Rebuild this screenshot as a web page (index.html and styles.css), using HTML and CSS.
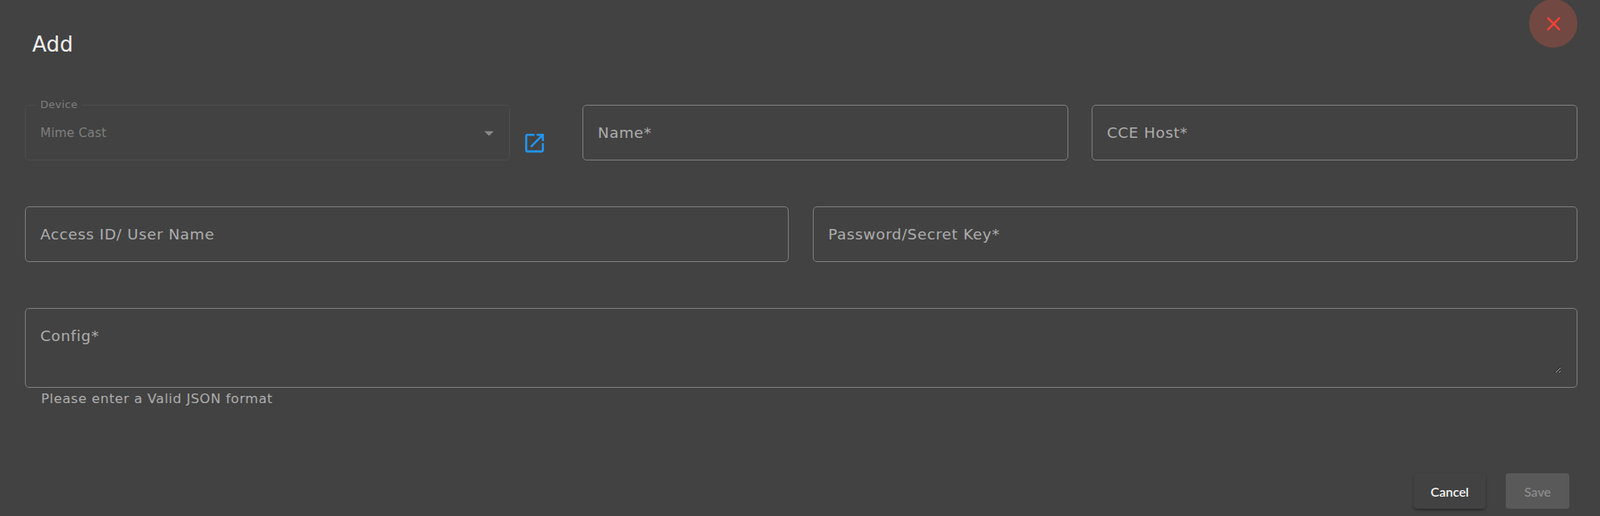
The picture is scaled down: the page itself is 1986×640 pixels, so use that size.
FILE: index.html
```html
<!DOCTYPE html>
<html lang="en">
<head>
<meta charset="utf-8">
<title>Add</title>
<link rel="stylesheet" href="styles.css">
</head>
<body>
<main class="dialog">
  <button class="close" type="button" aria-label="Close">
    <svg viewBox="0 0 24 24" width="24" height="24"><path d="M19 6.41 17.59 5 12 10.59 6.41 5 5 6.41 10.59 12 5 17.59 6.41 19 12 13.41 17.59 19 19 17.59 13.41 12z"/></svg>
  </button>
  <h1 class="title">Add</h1>
  <form class="form">
    <div class="row row-top">
      <div class="device-group">
        <div class="select">
          <span class="select-label">Device</span>
          <span class="select-value">Mime Cast</span>
          <svg class="caret" viewBox="0 0 24 24" width="28" height="28"><path d="M7 10l5 5 5-5z"/></svg>
        </div>
        <svg class="open-icon" viewBox="0 0 24 24" width="31" height="31"><path d="M19 19H5V5h7V3H5c-1.11 0-2 .9-2 2v14c0 1.1.89 2 2 2h14c1.1 0 2-.9 2-2v-7h-2v7zM14 3v2h3.59l-9.83 9.83 1.41 1.41L19 6.41V10h2V3h-7z"/></svg>
      </div>
      <label class="field"><input type="text"><span class="label">Name*</span></label>
      <label class="field"><input type="text"><span class="label">CCE Host*</span></label>
    </div>
    <div class="row row-two">
      <label class="field"><input type="text"><span class="label">Access ID/ User Name</span></label>
      <label class="field"><input type="password"><span class="label">Password/Secret Key*</span></label>
    </div>
    <div class="config">
      <label class="field field-area"><textarea></textarea><span class="label">Config*</span></label>
      <p class="help">Please enter a Valid JSON format</p>
    </div>
  </form>
  <div class="actions">
    <button class="btn btn-cancel" type="button">Cancel</button>
    <button class="btn btn-save" type="button" disabled>Save</button>
  </div>
</main>
</body>
</html>
```
FILE: styles.css
```css
* { box-sizing: border-box; }
html, body { margin: 0; height: 100%; }
body {
  background: #424242;
  font-family: "DejaVu Sans", Verdana, sans-serif;
  overflow: hidden;
}
.dialog {
  position: relative;
  width: 1986px;
  height: 640px;
  padding: 0 28px 0 31px;
}
.close {
  position: absolute;
  top: -1px;
  right: 28px;
  width: 60px;
  height: 60px;
  border: 0;
  border-radius: 50%;
  padding: 0;
  background: #724842;
  display: flex;
  align-items: center;
  justify-content: center;
}
.close svg { fill: #f44336; width: 29px; height: 29px; }
.title {
  margin: 0;
  padding: 39px 0 0 9px;
  height: 130px;
  font-size: 26px;
  line-height: 32px;
  letter-spacing: .2px;
  font-weight: 400;
  color: #f0f0f0;
}
.row { display: grid; }
.row-top {
  grid-template-columns: 663px 603px 603px;
  column-gap: 29px;
}
.row-two {
  margin-top: 57px;
  grid-template-columns: 948px 949px;
  column-gap: 30px;
}
.device-group { display: flex; align-items: flex-start; }
.select {
  position: relative;
  width: 602px;
  height: 69px;
  border: 1px solid #4d4d4d;
  border-radius: 5px;
  flex: none;
}
.select-label {
  position: absolute;
  top: -9px;
  left: 12px;
  padding: 0 6px;
  background: #424242;
  color: #7e7e7e;
  font-size: 13px;
  line-height: 16px;
  letter-spacing: .3px;
}
.select-value {
  position: absolute;
  left: 18px;
  top: 24px;
  color: #7e7e7e;
  font-size: 15.4px;
  line-height: 20px;
  letter-spacing: .1px;
}
.caret {
  position: absolute;
  right: 11px;
  top: 20px;
  fill: #8a8a8a;
}
.open-icon {
  flex: none;
  fill: #2196f3;
  margin: 32px 0 0 15px;
}
.field {
  position: relative;
  display: block;
  height: 69px;
}
.field input {
  display: block;
  width: 100%;
  height: 100%;
  background: transparent;
  border: 1px solid #808080;
  border-radius: 5px;
  outline: 0;
  margin: 0;
  padding: 0;
  color: #fff;
}
.label {
  position: absolute;
  left: 19px;
  top: 24px;
  color: #adadad;
  font-size: 18.5px;
  line-height: 22px;
  letter-spacing: .63px;
  pointer-events: none;
}
.config { margin-top: 57px; }
.field-area {
  height: 99px;
  border: 1px solid #808080;
  border-radius: 5px;
  padding: 17px 19px;
}
.field-area .label { left: 18px; top: 23px; }
.field-area textarea {
  display: block;
  width: 100%;
  height: 100%;
  background: transparent;
  border: 0;
  outline: 0;
  margin: 0;
  padding: 0;
  color: #fff;
  resize: vertical;
}
.help {
  margin: 4px 0 0 20px;
  color: #adadad;
  font-size: 16.5px;
  line-height: 20px;
  letter-spacing: .57px;
}
.actions {
  position: absolute;
  right: 38px;
  bottom: 9px;
  display: flex;
  gap: 25px;
}
.btn {
  height: 44px;
  border: 0;
  border-radius: 4px;
  font-family: Lato, "Noto Sans", sans-serif;
  font-size: 16px;
  font-weight: 500;
  padding: 0;
}
.btn-cancel {
  width: 89px;
  background: #424242;
  color: #fff;
  box-shadow: 0 3px 3px -2px rgba(0,0,0,.3), 0 2px 4px rgba(0,0,0,.22);
}
.btn-save {
  width: 79px;
  background: #595959;
  color: #8f8f8f;
}
```
